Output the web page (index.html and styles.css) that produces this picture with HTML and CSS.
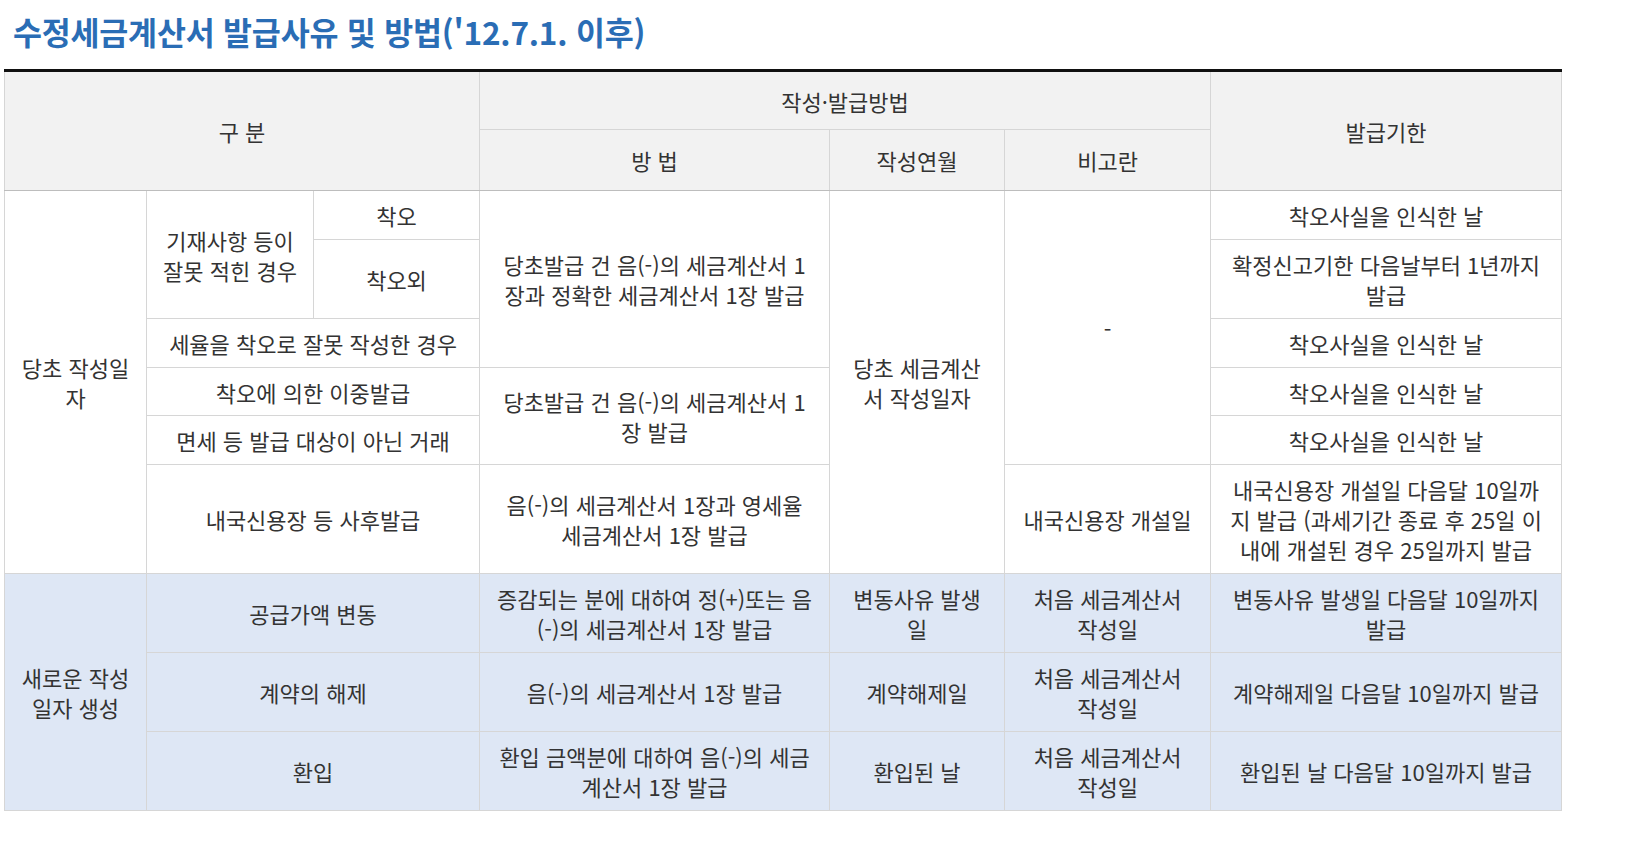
FILE: index.html
```html
<!DOCTYPE html>
<html lang="ko">
<head>
<meta charset="utf-8">
<title>수정세금계산서 발급사유 및 방법</title>
<link rel="stylesheet" href="styles.css">
</head>
<body>
<h1 class="title">수정세금계산서 발급사유 및 방법('12.7.1. 이후)</h1>
<table class="tax-table">
  <colgroup>
    <col class="c1"><col class="c2"><col class="c3"><col class="c4"><col class="c5"><col class="c6"><col class="c7">
  </colgroup>
  <thead>
    <tr class="h1">
      <th colspan="3" rowspan="2">구 분</th>
      <th colspan="3" class="mid">작성·발급방법</th>
      <th rowspan="2">발급기한</th>
    </tr>
    <tr class="h2">
      <th>방 법</th>
      <th>작성연월</th>
      <th>비고란</th>
    </tr>
  </thead>
  <tbody>
    <tr class="r49">
      <td rowspan="6">당초 작성일<br>자</td>
      <td rowspan="2">기재사항 등이<br>잘못 적힌 경우</td>
      <td>착오</td>
      <td rowspan="3">당초발급 건 음(-)의 세금계산서 1<br>장과 정확한 세금계산서 1장 발급</td>
      <td rowspan="6">당초 세금계산<br>서 작성일자</td>
      <td rowspan="5">-</td>
      <td>착오사실을 인식한 날</td>
    </tr>
    <tr class="r79">
      <td>착오외</td>
      <td>확정신고기한 다음날부터 1년까지<br>발급</td>
    </tr>
    <tr class="r49">
      <td colspan="2">세율을 착오로 잘못 작성한 경우</td>
      <td>착오사실을 인식한 날</td>
    </tr>
    <tr class="r48">
      <td colspan="2">착오에 의한 이중발급</td>
      <td rowspan="2">당초발급 건 음(-)의 세금계산서 1<br>장 발급</td>
      <td>착오사실을 인식한 날</td>
    </tr>
    <tr class="r49">
      <td colspan="2">면세 등 발급 대상이 아닌 거래</td>
      <td>착오사실을 인식한 날</td>
    </tr>
    <tr class="r109">
      <td colspan="2">내국신용장 등 사후발급</td>
      <td>음(-)의 세금계산서 1장과 영세율<br>세금계산서 1장 발급</td>
      <td>내국신용장 개설일</td>
      <td>내국신용장 개설일 다음달 10일까<br>지 발급 (과세기간 종료 후 25일 이<br>내에 개설된 경우 25일까지 발급</td>
    </tr>
  </tbody>
  <tbody class="new">
    <tr class="r79 first">
      <td rowspan="3">새로운 작성<br>일자 생성</td>
      <td colspan="2">공급가액 변동</td>
      <td>증감되는 분에 대하여 정(+)또는 음<br>(-)의 세금계산서 1장 발급</td>
      <td>변동사유 발생<br>일</td>
      <td>처음 세금계산서<br>작성일</td>
      <td>변동사유 발생일 다음달 10일까지<br>발급</td>
    </tr>
    <tr class="r79">
      <td colspan="2">계약의 해제</td>
      <td>음(-)의 세금계산서 1장 발급</td>
      <td>계약해제일</td>
      <td>처음 세금계산서<br>작성일</td>
      <td>계약해제일 다음달 10일까지 발급</td>
    </tr>
    <tr class="r79">
      <td colspan="2">환입</td>
      <td>환입 금액분에 대하여 음(-)의 세금<br>계산서 1장 발급</td>
      <td>환입된 날</td>
      <td>처음 세금계산서<br>작성일</td>
      <td>환입된 날 다음달 10일까지 발급</td>
    </tr>
  </tbody>
</table>
</body>
</html>
```

FILE: styles.css
```css
html, body {
  margin: 0;
  padding: 0;
  background: #ffffff;
}

body {
  font-family: "Noto Sans CJK KR", "Noto Sans", sans-serif;
  color: #333333;
}

.title {
  margin: 0;
  padding-left: 13px;
  height: 62px;
  line-height: 62px;
  font-size: 31.5px;
  font-weight: 700;
  color: #2a6db5;
  letter-spacing: -0.2px;
  white-space: nowrap;
}

.tax-table {
  margin: 7px 0 0 4px;
  width: 1557px;
  table-layout: fixed;
  border-collapse: collapse;
  border-top: 3px solid #111111;
  font-size: 22px;
  line-height: 30px;
  letter-spacing: 0;
}

.c1 { width: 142px; }
.c2 { width: 167px; }
.c3 { width: 166px; }
.c4 { width: 350px; }
.c5 { width: 175px; }
.c6 { width: 206px; }
.c7 { width: 351px; }

.tax-table th,
.tax-table td {
  border: 1px solid #d6d6d6;
  padding: 0 2px;
  text-align: center;
  vertical-align: middle;
  font-weight: 400;
  white-space: nowrap;
}

.tax-table th {
  background: #f2f2f2;
}

.tax-table thead tr.h2 th,
.tax-table thead tr.h1 th[rowspan] {
  border-bottom: 1px solid #bdbdbd;
}

.tax-table thead tr.h1 th {
  border-top: 3px solid #111111;
}

.h1 { height: 59px; }
.h2 { height: 61px; }
.r48 { height: 48px; }
.r49 { height: 49px; }
.r79 { height: 79px; }
.r109 { height: 109px; }

.tax-table tbody.new td {
  background: #dee7f5;
}

.tax-table tbody.new tr.first td {
  border-top: 1px solid #c9c9c9;
}
```
